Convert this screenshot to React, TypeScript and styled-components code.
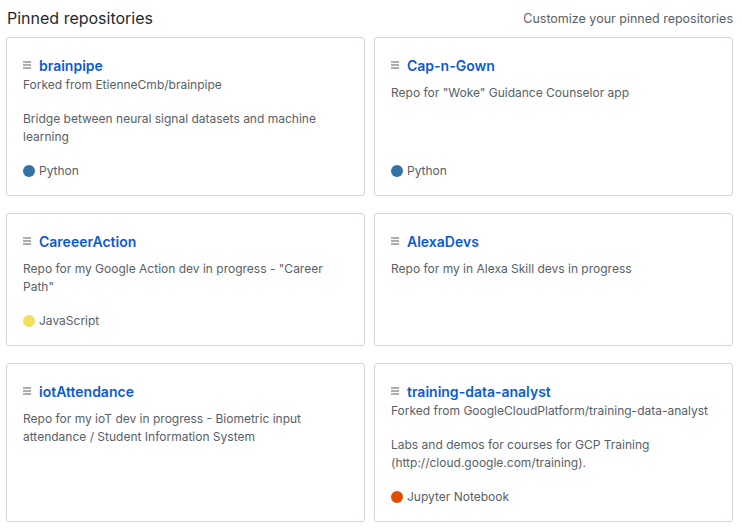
import React from "react";
import styled, { createGlobalStyle } from "styled-components";

const Global = createGlobalStyle`
  html, body { margin: 0; padding: 0; background: #fff; }
  body { font-family: Inter, "Liberation Sans", sans-serif; color: #24292e; }
`;

const Page = styled.div`
  padding: 0 9px 0 6px;
`;

const Header = styled.div`
  display: flex;
  justify-content: space-between;
  align-items: center;
  height: 37px;
`;

const Heading = styled.h2`
  margin: 0 0 0 1px;
  font-size: 16px;
  font-weight: 400;
  color: #24292e;
  padding-bottom: 2px;
`;

const Customize = styled.span`
  font-size: 12.5px;
  color: #586069;
`;

const Grid = styled.div`
  display: grid;
  grid-template-columns: 1fr 1fr;
  column-gap: 9px;
  row-gap: 17px;
`;

const Card = styled.div`
  border: 1px solid #d1d5da;
  border-radius: 3px;
  padding: 16px;
  display: flex;
  flex-direction: column;
`;

const TitleRow = styled.div`
  display: flex;
  align-items: center;
  height: 22px;
`;

const Icon = styled.svg`
  width: 8px;
  height: 8px;
  margin-right: 8px;
  flex: none;
`;

const Title = styled.a`
  font-size: 14px;
  font-weight: 600;
  color: #0a5bd6;
  text-decoration: none;
`;

const Fork = styled.p`
  margin: 0 0 8px;
  font-size: 12px;
  line-height: 18px;
  color: #586069;
`;

const Desc = styled.p`
  margin: 8px 0 16px;
  font-size: 12px;
  line-height: 18px;
  color: #586069;
`;

const Lang = styled.p`
  margin: auto 0 -1px;
  font-size: 12px;
  line-height: 18px;
  color: #586069;
  display: flex;
  align-items: center;
`;

const Dot = styled.span<{ $color: string }>`
  width: 12px;
  height: 12px;
  border-radius: 50%;
  background: ${(p) => p.$color};
  margin-right: 4px;
  flex: none;
`;

const Spacer = styled.div`
  margin-top: auto;
`;

type Repo = {
  name: string;
  fork?: string;
  desc: string;
  lang?: { name: string; color: string };
};

const repos: Repo[] = [
  {
    name: "brainpipe",
    fork: "EtienneCmb/brainpipe",
    desc: "Bridge between neural signal datasets and machine learning",
    lang: { name: "Python", color: "#3572a5" },
  },
  {
    name: "Cap-n-Gown",
    desc: 'Repo for "Woke" Guidance Counselor app',
    lang: { name: "Python", color: "#3572a5" },
  },
  {
    name: "CareeerAction",
    desc: 'Repo for my Google Action dev in progress - "Career Path"',
    lang: { name: "JavaScript", color: "#f1e05a" },
  },
  {
    name: "AlexaDevs",
    desc: "Repo for my in Alexa Skill devs in progress",
  },
  {
    name: "iotAttendance",
    desc: "Repo for my ioT dev in progress - Biometric input attendance / Student Information System",
  },
  {
    name: "training-data-analyst",
    fork: "GoogleCloudPlatform/training-data-analyst",
    desc: "Labs and demos for courses for GCP Training (http://cloud.google.com/training).",
    lang: { name: "Jupyter Notebook", color: "#e34c00" },
  },
];

const RepoIcon = () => (
  <Icon viewBox="0 0 8 8">
    <rect x="0" y="0.5" width="8" height="1" fill="#586069" />
    <rect x="0" y="3.5" width="8" height="1" fill="#586069" />
    <rect x="0" y="6.5" width="8" height="1" fill="#586069" />
  </Icon>
);

export default function App() {
  return (
    <Page>
      <Global />
      <Header>
        <Heading>Pinned repositories</Heading>
        <Customize>Customize your pinned repositories</Customize>
      </Header>
      <Grid>
        {repos.map((r) => (
          <Card key={r.name}>
            <TitleRow>
              <RepoIcon />
              <Title href="#">{r.name}</Title>
            </TitleRow>
            {r.fork && <Fork>Forked from {r.fork}</Fork>}
            <Desc>{r.desc}</Desc>
            {r.lang ? (
              <Lang>
                <Dot $color={r.lang.color} />
                {r.lang.name}
              </Lang>
            ) : (
              <Spacer />
            )}
          </Card>
        ))}
      </Grid>
    </Page>
  );
}
